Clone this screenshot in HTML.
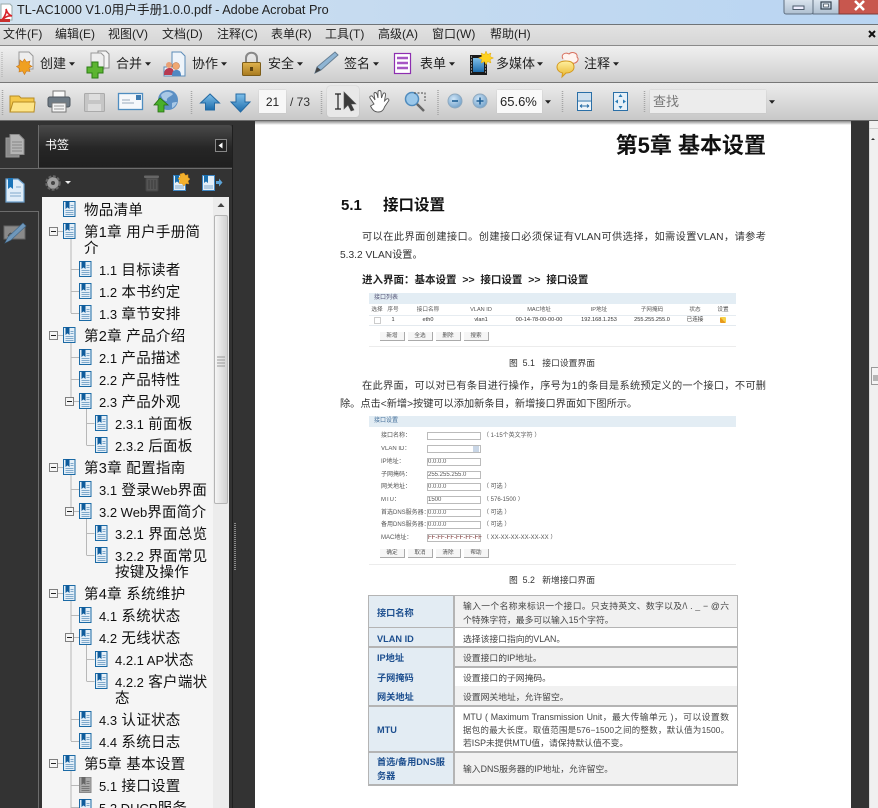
<!DOCTYPE html>
<html lang="zh"><head><meta charset="utf-8"><title>TL-AC1000</title>
<style>
html,body{margin:0;padding:0;width:878px;height:808px;overflow:hidden;background:#333}
body{position:relative;font-family:"Liberation Sans","Noto Sans CJK SC",sans-serif;color:#111}
.b{position:absolute}
.t{position:absolute;white-space:nowrap;line-height:16px}
.m{font-size:12px;top:25px;color:#222;line-height:18px}
.l{font-size:13px;top:56px;color:#222}
.s{font-size:14.5px;color:#111;line-height:16px;letter-spacing:.3px;margin-top:2px}
.n{font-size:13px;letter-spacing:0}
.p{font-size:10.2px;color:#333;line-height:14px;filter:blur(.25px);margin-top:2px}
.j{white-space:normal;text-align:justify;text-align-last:justify}
.f{font-size:5.6px;color:#555;line-height:8px;text-align:center;filter:blur(.3px)}
.g{font-size:6px;color:#555;line-height:8px;filter:blur(.3px)}
.c{font-size:8.8px;color:#333;line-height:12px;filter:blur(.2px);margin-top:1px}
.k{font-size:9.2px;font-weight:bold;color:#1d4f8f;line-height:14px;filter:blur(.2px);margin-top:1px}
.v{font-size:8.8px;color:#444;line-height:14px;filter:blur(.2px);margin-top:1px}
.i{position:absolute;background:#fff;border:1px solid #bbb;height:6px;width:52px;left:427px}
.btn{position:absolute;width:24px;height:8px;background:#f6f6f6;border:1px solid #aaa;border-width:0 1px 1px 0}
</style></head><body>

<div class="b" style="left:0;top:0;width:878px;height:24px;background:linear-gradient(90deg,#d2e2ef 0,#c6dbf0 40%,#b9d5f2 100%)"></div>
<div class="b" style="left:0;top:24px;width:878px;height:1px;background:#6f7478"></div>
<div class="b" style="left:0;top:25px;width:878px;height:20px;background:linear-gradient(#e2e2e2,#d6d6d6)"></div>
<div class="b" style="left:0;top:45px;width:878px;height:1px;background:#8a8a8a"></div>
<div class="b" style="left:0;top:46px;width:878px;height:36px;background:linear-gradient(#f0f0f0,#cdcdcd)"></div>
<div class="b" style="left:0;top:82px;width:878px;height:1px;background:#777"></div>
<div class="b" style="left:0;top:83px;width:878px;height:37px;background:linear-gradient(#ececec,#c8c8c8)"></div>
<div class="b" style="left:0;top:120px;width:878px;height:1px;background:#6a6a6a"></div>

<div class="b" style="left:327px;top:86px;width:32px;height:31px;background:#e8e8e8;border-radius:3px;box-shadow:0 0 1px #aaa"></div>
<div class="b" style="left:259px;top:90px;width:27px;height:23px;background:#f7f7f7;box-shadow:0 0 1px #bbb"></div>
<div class="b" style="left:497px;top:90px;width:45px;height:23px;background:#f9f9f9;box-shadow:0 0 1px #bbb"></div>
<div class="b" style="left:650px;top:90px;width:116px;height:23px;background:#ececec;box-shadow:0 0 1px #bbb"></div>

<div class="b" style="left:255px;top:121px;width:596px;height:687px;background:#fff"></div>
<div class="b" style="left:0;top:121px;width:878px;height:4px;background:#333"></div>
<div class="b" style="left:255px;top:121px;width:596px;height:4px;background:linear-gradient(#8d8d8d,#fff)"></div>

<div class="b" style="left:869px;top:121px;width:9px;height:687px;background:#f0f0f0;border-left:1px solid #dcdcdc;box-sizing:border-box"></div>
<div class="b" style="left:871px;top:367px;width:7px;height:18px;background:#f4f4f4;border:1px solid #999;border-right:0;box-sizing:border-box"></div>
<div class="b" style="left:869px;top:128px;width:9px;height:1px;background:#ccc"></div>

<div class="b" style="left:38px;top:125px;width:194px;height:42px;background:linear-gradient(#4a4a4a,#262626 55%,#1f1f1f);border-radius:3px 3px 0 0"></div>
<div class="b" style="left:0;top:168px;width:232px;height:1px;background:#6c6c6c"></div>
<div class="b" style="left:38px;top:125px;width:1px;height:43px;background:#6c6c6c"></div>
<div class="b" style="left:0;top:211px;width:38px;height:1px;background:#6c6c6c"></div>
<div class="b" style="left:38px;top:211px;width:1px;height:597px;background:#6c6c6c"></div>
<div class="b" style="left:232px;top:125px;width:1px;height:683px;background:#1f1f1f"></div>
<div class="b" style="left:42px;top:197px;width:187px;height:611px;background:#f5f5f5"></div>
<div class="b" style="left:213px;top:197px;width:16px;height:611px;background:#ececec"></div>
<div class="b" style="left:214px;top:215px;width:14px;height:289px;background:linear-gradient(90deg,#f6f6f6,#d2d2d2);border:1px solid #b5b5b5;box-sizing:border-box;border-radius:2px"></div>

<svg class="b" style="left:0;top:0" width="878" height="808" viewBox="0 0 878 808" xmlns="http://www.w3.org/2000/svg">
<defs>
<linearGradient id="blue" x1="0" y1="0" x2="0" y2="1"><stop offset="0" stop-color="#7fc0ea"/><stop offset="1" stop-color="#1d6cab"/></linearGradient>
<linearGradient id="gold" x1="0" y1="0" x2="0" y2="1"><stop offset="0" stop-color="#e0b44f"/><stop offset="1" stop-color="#a87a1f"/></linearGradient>
<linearGradient id="yel" x1="0" y1="0" x2="0" y2="1"><stop offset="0" stop-color="#fff0a0"/><stop offset="1" stop-color="#e8b52c"/></linearGradient>
<linearGradient id="btn" x1="0" y1="0" x2="0" y2="1"><stop offset="0" stop-color="#dfe8f1"/><stop offset="1" stop-color="#aebfd0"/></linearGradient>
<radialGradient id="orb" cx=".4" cy=".35" r=".7"><stop offset="0" stop-color="#cfe5f7"/><stop offset="1" stop-color="#6f9fc8"/></radialGradient>
<symbol id="bm" viewBox="0 0 13 16"><rect x=".5" y=".5" width="11.5" height="15" fill="#e4eff8" stroke="#1b6aa5"/><path d="M2.5 0h4v8L4.5 6.4 2.5 8z" fill="#0f5c9c"/><path d="M7.500 4.500h3M7.500 6.500h3M2.500 9.500h8M2.500 11.500h8M2.500 13.500h8" stroke="#7fa9cb" fill="none"/></symbol>
<symbol id="bg" viewBox="0 0 13 16"><rect x=".5" y=".5" width="11.500" height="15" fill="#a9a9a9" stroke="#8a8a8a"/><path d="M2.500 0h4v8L4.500 6.400 2.500 8z" fill="#666"/><path d="M7.500 4.500h3M7.500 6.500h3M2.500 9.500h8M2.500 11.500h8M2.500 13.500h8" stroke="#777" fill="none"/></symbol>
<symbol id="mn" viewBox="0 0 9 9"><rect x=".5" y=".5" width="8" height="8" fill="#f5f5f5" stroke="#808080"/><path d="M2 4.500h5" stroke="#222"/></symbol>
<symbol id="dp" viewBox="0 0 7 4"><path d="M0 0h7L3.500 4z" fill="#222"/></symbol>
</defs>

<path d="M1 4h9l2 2v14H1z" fill="#fff" stroke="#9aa"/><path d="M2 20c3-4 5-8 4-11 1 4 3 6 6 7-4-1-7 1-10 4z" fill="none" stroke="#d8232a" stroke-width="1.600"/>
<rect x="0" y="19" width="10" height="3" fill="#c9302c"/>

<rect x="784" y="-2" width="29" height="16" rx="2" fill="url(#btn)" stroke="#5f6f80"/>
<rect x="813" y="-2" width="26" height="16" fill="url(#btn)" stroke="#5f6f80"/>
<rect x="839" y="-2" width="40" height="16" fill="#c8574e" stroke="#7b3a35"/>
<rect x="793" y="6" width="11" height="3.500" fill="#eef" stroke="#4b5b6b"/>
<rect x="821" y="2" width="10" height="7" fill="none" stroke="#33414f" stroke-width="1.200"/><rect x="823.500" y="4" width="5" height="3" fill="#fff" stroke="#33414f" stroke-width=".7"/>
<path d="M855 1l9 9M864 1l-9 9" stroke="#fff" stroke-width="2.600"/>
<path d="M869 31l6 6M875 31l-6 6" stroke="#111" stroke-width="2"/>

<path d="M2 52v26" stroke="#aaa" stroke-dasharray="1 1"/>
<path d="M19 52h10l4 4v13H19z" fill="#eee" stroke="#999"/><path d="M20 60l2.500 2 2-3 2 3 3.500-1-1 3.500 3 2-3 1.500 1 3.500-3.500-.5-2 3.500-2-3.500-3.500 1 .5-3.500-3-2 3-1.500z" fill="#f0a020" stroke="#c9761a" stroke-width=".6"/>
<path d="M98 51h8l3 3v14H98z" fill="#f4f4f4" stroke="#888"/><path d="M91 53h10l3 3v13H91z" fill="#eee" stroke="#999"/><path d="M92 62h6v5h5v6h-5v5h-6v-5h-5v-6h5z" fill="#5cb531" stroke="#2a7d12"/>
<path d="M172 52h9l4 4v20h-21v-9h8z" fill="#eef4fa" stroke="#5c8cb8"/><circle cx="176" cy="66" r="3.500" fill="#f0a872" stroke="#b56a3a" stroke-width=".5"/><circle cx="169" cy="65" r="3" fill="#e9a074"/><path d="M164 75c0-6 3-7 6-7s4 2 4 7z" fill="#b73a50"/><path d="M172 76c0-5 2-6 4.500-6s4.500 1 4.500 6z" fill="#4f88c2"/>
<path d="M246 63v-5c0-7 11-7 11 0v5" fill="none" stroke="#888" stroke-width="2"/><rect x="242.500" y="62.500" width="18" height="13" rx="1" fill="url(#gold)" stroke="#7d5d18"/><rect x="250" y="67" width="3" height="4" fill="#5d430f"/>
<path d="M315 73l2-6 18-15 3 3-17 15z" fill="#8fb5d4" stroke="#667f94"/><path d="M315 73l2-6 4 3z" fill="#444"/>
<rect x="394.500" y="53.500" width="16" height="20" fill="#fff" stroke="#8d2fb0" stroke-width="1.200"/><path d="M397 58h11M397 63h11M397 68h11" stroke="#a656c4" stroke-width="2.500"/>
<rect x="470" y="55" width="17" height="20" fill="#1a1a1a"/><rect x="473" y="58" width="11" height="14" fill="url(#blue)"/><path d="M471 57h1M471 60h1M471 63h1M471 66h1M471 69h1M471 72h1M485 57h1M485 60h1M485 63h1M485 66h1M485 69h1M485 72h1" stroke="#eee"/><path d="M486 51l1.500 3.500 3.500-1.500-1 3.500 3.500 1.500-3.500 1.500 1 3.500-3.500-1.500-1.500 3.500-1.500-3.500-3.500 1.500 1-3.500-3.500-1.500 3.500-1.500-1-3.500 3.500 1.500z" fill="#ffd21f" stroke="#e0a812" stroke-width=".5"/>
<path d="M563 59c-3-5 3-7 6-5 3-3 9-1 8 3 3 3-1 7-5 6" fill="#fff4f0" stroke="#d8705e"/><path d="M557 67c0-4 4-6 9-6s8 2 8 6-4 6-8 6l-4 4 .5-4c-3-.5-5.500-3-5.500-6z" fill="url(#yel)" stroke="#d49a20"/>

<use href="#dp" x="69" y="62" width="6" height="4"/><use href="#dp" x="145" y="62" width="6" height="4"/><use href="#dp" x="221" y="62" width="6" height="4"/><use href="#dp" x="297" y="62" width="6" height="4"/><use href="#dp" x="373" y="62" width="6" height="4"/><use href="#dp" x="449" y="62" width="6" height="4"/><use href="#dp" x="537" y="62" width="6" height="4"/><use href="#dp" x="613" y="62" width="6" height="4"/>

<path d="M2.500 90v26M191.500 91v24M321.500 91v24M438 90v25M562.500 91v22M644.500 91v22" stroke="#a5a5a5" stroke-dasharray="1 1" stroke-width="1.500"/>
<path d="M10 96h9l2 2h13v14H10z" fill="#f4c84a" stroke="#b68b23"/><path d="M10 112l3-10h22l-1 10z" fill="#fde58a" stroke="#b68b23"/>
<rect x="53" y="91" width="12" height="7" fill="#fafafa" stroke="#777"/><rect x="48" y="97" width="22" height="10" rx="2" fill="#6f7b85" stroke="#4d565e"/><rect x="52" y="103" width="14" height="9" fill="#f4f4f4" stroke="#777"/><path d="M54 106h10M54 109h10" stroke="#999"/>
<rect x="84.500" y="93.500" width="20" height="18" rx="1" fill="#c6c6c6" stroke="#aaa"/><rect x="89" y="94" width="11" height="6" fill="#dedede"/><rect x="88" y="104" width="13" height="7" fill="#dcdcdc"/>
<rect x="118.500" y="93.500" width="24" height="16" fill="#f6f8fb" stroke="#4f8dc0" stroke-width="1.300"/><rect x="136" y="95" width="5" height="5" fill="#3d7ab0"/><path d="M122 100h8M122 103h12" stroke="#9ab"/>
<circle cx="168" cy="100" r="10" fill="#5b8fc4"/><path d="M161 95c4-5 10-3 12-1-2 3-7 3-6 7-3 0-5-2-6-6zM172 103c2-1 5-1 5-1-1 3-3 5-5 6z" fill="#a9c8e6"/><path d="M160 98l-6 7h4v7h6v-7h4z" fill="#49b02a" stroke="#276d12" stroke-width=".8"/>
<path d="M210 94l-9.500 9h5v7h9v-7h5z" fill="url(#blue)" stroke="#246aa3"/>
<path d="M236 94h9v8h5l-9.500 10-9.500-10h5z" fill="url(#blue)" stroke="#246aa3"/>
<path d="M335 94h6M335 109h6M338 94v15" stroke="#222" stroke-width="1.200" fill="none"/><path d="M344 92v17l4-4 3 6 3-1-3-6h5z" fill="#3a3a3a" stroke="#555" stroke-width=".6"/>
<path d="M374 104l-4-6c-1-2 2-3 3-1l2 3-1-6c0-2 2-2 3 0l1 4 0-6c0-2 3-2 3 0l.5 6 1.500-4c1-2 3-1 2.500 1l-1 6 2-2c2-1 3 1 2 2l-4 6c-1 3-3 5-6 5-4 0-6-2-8-6z" fill="#fff" stroke="#555" stroke-width=".9"/>
<circle cx="412" cy="99" r="6.500" fill="#9bc8ea" stroke="#4f8bbd" stroke-width="1.500"/><path d="M417 104l7 7" stroke="#666" stroke-width="2.500"/><path d="M414 93h11v8" fill="none" stroke="#444" stroke-dasharray="2 1.500"/>
<circle cx="455" cy="101" r="7" fill="url(#orb)" stroke="#8fa9bf"/><path d="M452 101h6" stroke="#1e5f95" stroke-width="1.600"/>
<circle cx="480" cy="101" r="7" fill="url(#orb)" stroke="#8fa9bf"/><path d="M476.500 101h7M480 97.500v7" stroke="#1e5f95" stroke-width="1.600"/>
<use href="#dp" x="545" y="100" width="6" height="4"/><use href="#dp" x="769" y="100" width="6" height="4"/>
<rect x="577.500" y="92.500" width="14" height="18" fill="#eef4f9" stroke="#2a6fa7"/><rect x="578" y="93" width="13" height="7" fill="#cfe0ee"/><path d="M578 101h14" stroke="#2a6fa7"/><path d="M580 106h9M580 106l2-1.500M580 106l2 1.500M589 106l-2-1.500M589 106l-2 1.500" stroke="#2a6fa7" fill="none"/>
<rect x="613.500" y="92.500" width="14" height="18" fill="#e6f0f8" stroke="#2a6fa7"/><path d="M620.500 94l-2 3h4zM620.500 109l-2-3h4zM615 101.500l3-2v4zM626 101.500l-3-2v4z" fill="#2a7bb5"/>

<rect x="6" y="138" width="13" height="19" fill="#8a8a8a" stroke="#999"/><path d="M10 134.500h9l5 5v15H10z" fill="#b5b5b5" stroke="#8b8b8b"/><path d="M12 142h10M12 145h10M12 148h10M12 151h10" stroke="#888"/>
<path d="M6 179h12l6 5v18H6z" fill="#e0edf8" stroke="#6b9fcb" stroke-width="1.200"/><path d="M8 178h5v11l-2.500-2-2.500 2z" fill="#1a74b8"/><path d="M10 193h11M10 196h11M16 187h5" stroke="#7fa9cb"/>
<rect x="4" y="226" width="21" height="13" fill="#8a8a8a" stroke="#666"/><path d="M8 236c2-3 3-4 4-1s3-3 5-2" stroke="#444" fill="none"/><path d="M5 243l3-6 15-14 3 3-15 14z" fill="#6f97ba" stroke="#3e6587" stroke-width=".6"/>

<rect x="215.500" y="139.500" width="11" height="12" fill="#222" stroke="#888"/><path d="M222.500 142.500v6l-4-3z" fill="#fff"/>

<circle cx="53" cy="183" r="6" fill="#8f8f8f" stroke="#666" stroke-width="3.500" stroke-dasharray="2.500 1.500"/><circle cx="53" cy="183" r="5.500" fill="#a0a0a0"/><circle cx="53" cy="183" r="2" fill="#444"/>
<path d="M65 181h6l-3 3z" fill="#eee"/>
<rect x="146" y="178" width="12" height="13" rx="1" fill="#555" stroke="#444"/><rect x="144" y="175.500" width="15" height="2.500" rx="1" fill="#666"/><path d="M149 180v9M152 180v9M155 180v9" stroke="#3a3a3a"/>
<rect x="173.500" y="175.500" width="12" height="15" fill="#e4eff8" stroke="#3f86c2"/><path d="M175 175h4v8l-2-1.500-2 1.500z" fill="#1a6fae"/><path d="M175 186h9M175 188h9" stroke="#7fa9cb"/><path d="M184 173l1.500 2.500 2.500-1 0 3 2 1.500-2 2 1 3-3-.5-2 2.500-2-2.500-3 0 1-3-2-2 2.500-1.500-.5-3z" fill="#f3b02c" stroke="#d48c1a" stroke-width=".5"/>
<rect x="202.500" y="175.500" width="12" height="15" fill="#e4eff8" stroke="#3f86c2"/><path d="M204 175h4v8l-2-1.500-2 1.500z" fill="#1a6fae"/><path d="M204 186h9M204 188h9" stroke="#7fa9cb"/><path d="M216 181h3v-2.500l3.500 4-3.500 4V184h-3z" fill="#5da4d8"/>

<path d="M221 203l-3.500 4h7z" fill="#444"/>
<path d="M217 357h8M217 360h8M217 363h8M217 366h8" stroke="#999"/>
<path d="M235 523v47" stroke="#8a8a8a" stroke-width="2" stroke-dasharray="1 1"/>
<path d="M873 138l-2 2h4z" fill="#333"/>
<path d="M873 376h5M873 378h5M873 380h5" stroke="#777"/>

<g stroke="#b8b8b8" fill="none">
<path d="M58 231.500h5M71 239v74M71 269.500h8M71 291.500h8M71 313.500h8"/>
<path d="M58 335.500h5M71 343v58M71 357.500h8M71 379.500h8M74 401.500h5M86.500 409v36M86.500 423.500h8M86.500 445.500h8"/>
<path d="M58 467.500h5M71 475v36M71 489.500h8M74 511.500h5M86.500 519v36M86.500 533.500h8M86.500 555.500h8"/>
<path d="M58 593.500h5M71 601v140M71 615.500h8M74 637.500h5M86.500 645v36M86.500 659.500h8M86.500 681.500h8M71 719.500h8M71 741.500h8"/>
<path d="M58 763.500h5M71 771v37M71 785.500h8M71 807.500h8"/>
</g>
<use href="#mn" x="49" y="227" width="9" height="9"/><use href="#mn" x="49" y="331" width="9" height="9"/><use href="#mn" x="65" y="397" width="9" height="9"/><use href="#mn" x="49" y="463" width="9" height="9"/><use href="#mn" x="65" y="507" width="9" height="9"/><use href="#mn" x="49" y="589" width="9" height="9"/><use href="#mn" x="65" y="633" width="9" height="9"/><use href="#mn" x="49" y="759" width="9" height="9"/>

<use href="#bm" x="63" y="201" width="13" height="16"/><use href="#bm" x="63" y="223" width="13" height="16"/><use href="#bm" x="79" y="261" width="13" height="16"/><use href="#bm" x="79" y="283" width="13" height="16"/><use href="#bm" x="79" y="305" width="13" height="16"/><use href="#bm" x="63" y="327" width="13" height="16"/><use href="#bm" x="79" y="349" width="13" height="16"/><use href="#bm" x="79" y="371" width="13" height="16"/><use href="#bm" x="79" y="393" width="13" height="16"/><use href="#bm" x="95" y="415" width="13" height="16"/><use href="#bm" x="95" y="437" width="13" height="16"/><use href="#bm" x="63" y="459" width="13" height="16"/><use href="#bm" x="79" y="481" width="13" height="16"/><use href="#bm" x="79" y="503" width="13" height="16"/><use href="#bm" x="95" y="525" width="13" height="16"/><use href="#bm" x="95" y="547" width="13" height="16"/><use href="#bm" x="63" y="585" width="13" height="16"/><use href="#bm" x="79" y="607" width="13" height="16"/><use href="#bm" x="79" y="629" width="13" height="16"/><use href="#bm" x="95" y="651" width="13" height="16"/><use href="#bm" x="95" y="673" width="13" height="16"/><use href="#bm" x="79" y="711" width="13" height="16"/><use href="#bm" x="79" y="733" width="13" height="16"/><use href="#bm" x="63" y="755" width="13" height="16"/><use href="#bg" x="79" y="777" width="13" height="16"/><use href="#bm" x="79" y="799" width="13" height="16"/>
</svg>

<div class="t" style="left:17px;top:1px;font-size:12.7px;color:#222;line-height:19px">TL-AC1000 V1.0用户手册1.0.0.pdf - Adobe Acrobat Pro</div>

<div class="t m" style="left:3px">文件(F)</div><div class="t m" style="left:55px">编辑(E)</div><div class="t m" style="left:108px">视图(V)</div><div class="t m" style="left:162px">文档(D)</div><div class="t m" style="left:217px">注释(C)</div><div class="t m" style="left:271px">表单(R)</div><div class="t m" style="left:325px">工具(T)</div><div class="t m" style="left:378px">高级(A)</div><div class="t m" style="left:432px">窗口(W)</div><div class="t m" style="left:490px">帮助(H)</div>

<div class="t l" style="left:40px">创建</div><div class="t l" style="left:116px">合并</div><div class="t l" style="left:192px">协作</div><div class="t l" style="left:268px">安全</div><div class="t l" style="left:344px">签名</div><div class="t l" style="left:420px">表单</div><div class="t l" style="left:496px">多媒体</div><div class="t l" style="left:584px">注释</div>

<div class="t" style="left:259px;width:27px;text-align:center;top:94px;font-size:12px;color:#222">21</div>
<div class="t" style="left:290px;top:94px;font-size:12px;color:#333">/ 73</div>
<div class="t" style="left:500px;top:94px;font-size:13px;color:#222">65.6%</div>
<div class="t" style="left:653px;top:94px;font-size:13px;color:#777">查找</div>
<div class="t" style="left:45px;top:137px;font-size:12px;color:#fff">书签</div>

<div class="t s" style="left:84px;top:201px">物品清单</div>
<div class="t s" style="left:84px;top:223px">第1章 用户手册简<br>介</div>
<div class="t s" style="left:99px;top:261px"><span class="n">1.1</span> 目标读者</div>
<div class="t s" style="left:99px;top:283px"><span class="n">1.2</span> 本书约定</div>
<div class="t s" style="left:99px;top:305px"><span class="n">1.3</span> 章节安排</div>
<div class="t s" style="left:84px;top:327px">第2章 产品介绍</div>
<div class="t s" style="left:99px;top:349px"><span class="n">2.1</span> 产品描述</div>
<div class="t s" style="left:99px;top:371px"><span class="n">2.2</span> 产品特性</div>
<div class="t s" style="left:99px;top:393px"><span class="n">2.3</span> 产品外观</div>
<div class="t s" style="left:115px;top:415px"><span class="n">2.3.1</span> 前面板</div>
<div class="t s" style="left:115px;top:437px"><span class="n">2.3.2</span> 后面板</div>
<div class="t s" style="left:84px;top:459px">第3章 配置指南</div>
<div class="t s" style="left:99px;top:481px"><span class="n">3.1</span> 登录<span class="n">Web</span>界面</div>
<div class="t s" style="left:99px;top:503px"><span class="n">3.2 Web</span>界面简介</div>
<div class="t s" style="left:115px;top:525px"><span class="n">3.2.1</span> 界面总览</div>
<div class="t s" style="left:115px;top:547px"><span class="n">3.2.2</span> 界面常见<br>按键及操作</div>
<div class="t s" style="left:84px;top:585px">第4章 系统维护</div>
<div class="t s" style="left:99px;top:607px"><span class="n">4.1</span> 系统状态</div>
<div class="t s" style="left:99px;top:629px"><span class="n">4.2</span> 无线状态</div>
<div class="t s" style="left:115px;top:651px"><span class="n">4.2.1 AP</span>状态</div>
<div class="t s" style="left:115px;top:673px"><span class="n">4.2.2</span> 客户端状<br>态</div>
<div class="t s" style="left:99px;top:711px"><span class="n">4.3</span> 认证状态</div>
<div class="t s" style="left:99px;top:733px"><span class="n">4.4</span> 系统日志</div>
<div class="t s" style="left:84px;top:755px">第5章 基本设置</div>
<div class="t s" style="left:99px;top:777px"><span class="n">5.1</span> 接口设置</div>
<div class="t s" style="left:99px;top:799px"><span class="n">5.2 DHCP</span>服务</div>

<div class="t" style="left:566px;width:200px;text-align:right;top:133px;line-height:26px;font-size:22px;font-weight:bold;color:#111">第5章 基本设置</div>
<div class="t" style="left:341px;top:198px;font-size:15px;font-weight:bold;color:#111">5.1</div>
<div class="t" style="left:383px;top:198px;font-size:15.500px;font-weight:bold;color:#111">接口设置</div>

<div class="t p j" style="left:362px;top:229px;width:404px">可以在此界面创建接口。创建接口必须保证有VLAN可供选择，如需设置VLAN，请参考</div>
<div class="t p" style="left:340px;top:247px">5.3.2 VLAN设置。</div>
<div class="t p" style="left:362px;top:271px;font-weight:bold;color:#222;font-size:10.500px">进入界面：基本设置 &nbsp;&gt;&gt; &nbsp;接口设置 &nbsp;&gt;&gt; &nbsp;接口设置</div>

<div class="b" style="left:369px;top:293px;width:367px;height:11px;background:#e3edf4"></div>
<div class="b" style="left:369px;top:304px;width:367px;height:12px;background:#fff;border-bottom:1px solid #e6ecf1;box-sizing:border-box"></div>
<div class="b" style="left:369px;top:325px;width:367px;height:1px;background:#e4eaef"></div>
<div class="b" style="left:369px;top:346px;width:367px;height:1px;background:#ececec"></div>
<div class="t g" style="left:374px;top:294px;color:#557">接口列表</div>
<div class="t f" style="left:367px;width:20px;top:306px">选择</div><div class="t f" style="left:383px;width:20px;top:306px">序号</div><div class="t f" style="left:408px;width:40px;top:306px">接口名称</div><div class="t f" style="left:461px;width:40px;top:306px">VLAN ID</div><div class="t f" style="left:519px;width:40px;top:306px">MAC地址</div><div class="t f" style="left:579px;width:40px;top:306px">IP地址</div><div class="t f" style="left:632px;width:40px;top:306px">子网掩码</div><div class="t f" style="left:685px;width:20px;top:306px">状态</div><div class="t f" style="left:713px;width:20px;top:306px">设置</div>
<div class="b" style="left:374px;top:317px;width:5px;height:5px;border:1px solid #ccc"></div>
<div class="t f" style="left:383px;width:20px;top:316px;color:#333">1</div><div class="t f" style="left:408px;width:40px;top:316px;color:#333">eth0</div><div class="t f" style="left:461px;width:40px;top:316px;color:#333">vlan1</div><div class="t f" style="left:509px;width:60px;top:316px;color:#333">00-14-78-00-00-00</div><div class="t f" style="left:569px;width:60px;top:316px;color:#333">192.168.1.253</div><div class="t f" style="left:622px;width:60px;top:316px;color:#333">255.255.255.0</div><div class="t f" style="left:685px;width:20px;top:316px;color:#333">已连接</div>
<div class="b" style="left:720px;top:317px;width:6px;height:6px;background:linear-gradient(45deg,#e89a1c 50%,#f7d24a 50%);border-radius:1px"></div>
<div class="btn" style="left:380px;top:332px"></div><div class="btn" style="left:408px;top:332px"></div><div class="btn" style="left:436px;top:332px"></div><div class="btn" style="left:464px;top:332px"></div>
<div class="t f" style="left:380px;width:24px;top:332px">新增</div><div class="t f" style="left:408px;width:24px;top:332px">全选</div><div class="t f" style="left:436px;width:24px;top:332px">删除</div><div class="t f" style="left:464px;width:24px;top:332px">搜索</div>

<div class="t c" style="left:509px;top:356px">图 &nbsp;5.1 &nbsp; 接口设置界面</div>

<div class="t p j" style="left:362px;top:378px;width:404px">在此界面，可以对已有条目进行操作，序号为1的条目是系统预定义的一个接口，不可删</div>
<div class="t p" style="left:340px;top:396px">除。点击&lt;新增&gt;按键可以添加新条目，新增接口界面如下图所示。</div>

<div class="b" style="left:369px;top:416px;width:367px;height:11px;background:#e3edf4"></div>
<div class="t g" style="left:374px;top:417px;color:#46709a">接口设置</div>
<div class="t g" style="left:381px;top:432px">接口名称：</div><div class="i" style="top:432px"></div><div class="t g" style="left:483px;top:432px">（ 1-15个英文字符 ）</div>
<div class="t g" style="left:381px;top:445px">VLAN ID：</div><div class="i" style="top:445px"></div><div class="b" style="left:473px;top:446px;width:6px;height:6px;background:#c9d6e6"></div>
<div class="t g" style="left:381px;top:458px">IP地址：</div><div class="i" style="top:458px"></div><div class="t g" style="left:428px;top:458px">0.0.0.0</div>
<div class="t g" style="left:381px;top:471px">子网掩码：</div><div class="i" style="top:471px"></div><div class="t g" style="left:428px;top:471px">255.255.255.0</div>
<div class="t g" style="left:381px;top:483px">网关地址：</div><div class="i" style="top:483px"></div><div class="t g" style="left:428px;top:483px">0.0.0.0</div><div class="t g" style="left:483px;top:483px">（ 可选 ）</div>
<div class="t g" style="left:381px;top:496px">MTU：</div><div class="i" style="top:496px"></div><div class="t g" style="left:428px;top:496px">1500</div><div class="t g" style="left:483px;top:496px">（ 576-1500 ）</div>
<div class="t g" style="left:381px;top:509px">首选DNS服务器：</div><div class="i" style="top:509px"></div><div class="t g" style="left:428px;top:509px">0.0.0.0</div><div class="t g" style="left:483px;top:509px">（ 可选 ）</div>
<div class="t g" style="left:381px;top:521px">备用DNS服务器：</div><div class="i" style="top:521px"></div><div class="t g" style="left:428px;top:521px">0.0.0.0</div><div class="t g" style="left:483px;top:521px">（ 可选 ）</div>
<div class="t g" style="left:381px;top:534px">MAC地址：</div><div class="i" style="top:534px"></div><div class="t g" style="left:428px;top:534px;color:#733">FF-FF-FF-FF-FF-FF</div><div class="t g" style="left:483px;top:534px">（ XX-XX-XX-XX-XX-XX ）</div>
<div class="btn" style="left:380px;top:549px"></div><div class="btn" style="left:408px;top:549px"></div><div class="btn" style="left:436px;top:549px"></div><div class="btn" style="left:464px;top:549px"></div>
<div class="t f" style="left:380px;width:24px;top:549px">确定</div><div class="t f" style="left:408px;width:24px;top:549px">取消</div><div class="t f" style="left:436px;width:24px;top:549px">清除</div><div class="t f" style="left:464px;width:24px;top:549px">帮助</div>
<div class="b" style="left:369px;top:564px;width:367px;height:1px;background:#ececec"></div>

<div class="t c" style="left:509px;top:573px">图 &nbsp;5.2 &nbsp; 新增接口界面</div>

<div class="b" style="left:368px;top:595px;width:370px;height:191px;background:#b4b4b4"></div>
<div class="b" style="left:369px;top:596px;width:84px;height:31px;background:#e3ecf3"></div>
<div class="b" style="left:369px;top:628px;width:84px;height:18px;background:#e3ecf3"></div>
<div class="b" style="left:369px;top:648px;width:84px;height:57px;background:#e3ecf3"></div>
<div class="b" style="left:369px;top:707px;width:84px;height:44px;background:#e3ecf3"></div>
<div class="b" style="left:369px;top:753px;width:84px;height:31px;background:#e3ecf3"></div>
<div class="b" style="left:455px;top:596px;width:282px;height:31px;background:#f1f1f1"></div>
<div class="b" style="left:455px;top:628px;width:282px;height:18px;background:#fff"></div>
<div class="b" style="left:455px;top:648px;width:282px;height:18px;background:#f1f1f1"></div>
<div class="b" style="left:455px;top:668px;width:282px;height:18px;background:#fff"></div>
<div class="b" style="left:455px;top:686px;width:282px;height:19px;background:#f1f1f1"></div>
<div class="b" style="left:455px;top:707px;width:282px;height:44px;background:#fff"></div>
<div class="b" style="left:455px;top:753px;width:282px;height:31px;background:#f1f1f1"></div>

<div class="t k" style="left:377px;top:605px">接口名称</div>
<div class="t k" style="left:377px;top:631px">VLAN ID</div>
<div class="t k" style="left:377px;top:650px">IP地址</div>
<div class="t k" style="left:377px;top:670px">子网掩码</div>
<div class="t k" style="left:377px;top:689px">网关地址</div>
<div class="t k" style="left:377px;top:722px">MTU</div>
<div class="t k" style="left:377px;top:754px">首选/备用DNS服<br>务器</div>

<div class="t v j" style="left:463px;top:598px;width:266px;font-size:8.8px">输入一个名称来标识一个接口。只支持英文、数字以及/\ . _ − @六</div>
<div class="t v" style="left:463px;top:612px">个特殊字符，最多可以输入15个字符。</div>
<div class="t v" style="left:463px;top:631px">选择该接口指向的VLAN。</div>
<div class="t v" style="left:463px;top:650px">设置接口的IP地址。</div>
<div class="t v" style="left:463px;top:670px">设置接口的子网掩码。</div>
<div class="t v" style="left:463px;top:689px">设置网关地址，允许留空。</div>
<div class="t v j" style="left:463px;top:709px;width:266px">MTU ( Maximum Transmission Unit，最大传输单元 )，可以设置数</div>
<div class="t v j" style="left:463px;top:722px;width:266px;font-size:8.4px">据包的最大长度。取值范围是576−1500之间的整数，默认值为1500。</div>
<div class="t v" style="left:463px;top:735px">若ISP未提供MTU值，请保持默认值不变。</div>
<div class="t v" style="left:463px;top:761px">输入DNS服务器的IP地址，允许留空。</div>

</body></html>
